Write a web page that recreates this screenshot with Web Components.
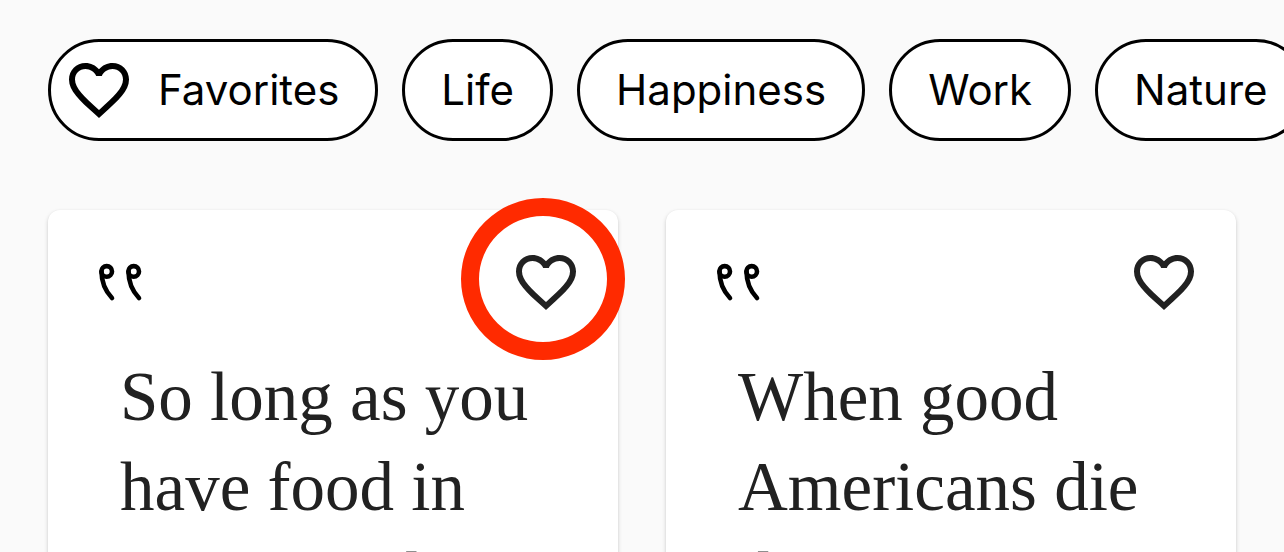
<!DOCTYPE html>
<html lang="en">
<head>
<meta charset="utf-8">
<title>Quotes</title>
<style>
  html, body { margin: 0; height: 100%; overflow: hidden; background: #fafafa; }
</style>
</head>
<body>
<quotes-page></quotes-page>

<script>
function attach(host, html) {
  const template = document.createElement('template');
  template.innerHTML = html;
  host.attachShadow({ mode: 'open' }).append(template.content.cloneNode(true));
}

class HeartIcon extends HTMLElement {
  constructor() {
    super();
    attach(this, `
      <style>
        :host { display: block; flex: none; width: 72px; height: 72px; }
        svg { display: block; width: 100%; height: 100%; fill: currentColor; }
      </style>
      <svg viewBox="0 0 24 24" aria-hidden="true"><path d="M16.5 3c-1.74 0-3.41.81-4.5 2.09C10.91 3.81 9.24 3 7.5 3 4.42 3 2 5.42 2 8.5c0 3.78 3.4 6.86 8.55 11.54L12 21.35l1.45-1.32C18.6 15.36 22 12.28 22 8.5 22 5.42 19.58 3 16.5 3zm-4.4 15.55l-.1.1-.1-.1C7.14 14.24 4 11.39 4 8.5 4 6.5 5.5 5 7.5 5c1.54 0 3.04.99 3.57 2.36h1.87C13.46 5.99 14.96 5 16.5 5c2 0 3.5 1.5 3.5 3.5 0 2.89-3.14 5.74-7.9 10.05z"/></svg>`);
  }
}
customElements.define('heart-icon', HeartIcon);

class QuoteMark extends HTMLElement {
  constructor() {
    super();
    attach(this, `
      <style>
        :host { display: block; width: 48px; height: 48px; }
        svg { display: block; fill: none; stroke: #000; stroke-width: 4.6; stroke-linecap: round; }
      </style>
      <svg width="48" height="48" viewBox="0 0 48 48" aria-hidden="true">
        <circle cx="10.7" cy="13.4" r="5.3"/><path d="M5.5 13.4C5.5 25 9.5 33 16 40"/>
        <circle cx="37.7" cy="13.4" r="5.3"/><path d="M32.5 13.4C32.5 25 36.5 33 43 40"/>
      </svg>`);
  }
}
customElements.define('quote-mark', QuoteMark);

class CategoryChip extends HTMLElement {
  constructor() {
    super();
    attach(this, `
      <style>
        :host { display: block; flex: none; }
        button {
          box-sizing: border-box; display: flex; align-items: center; gap: 23px;
          height: 102px; margin: 0; padding: 0 36px;
          border: 3px solid #000; border-radius: 51px; background: #fff; color: #000;
          font: 400 42px/60px Inter, sans-serif; white-space: nowrap;
        }
        :host([with-icon]) button { padding-left: 12px; }
      </style>
      <button type="button"><slot name="icon"></slot><slot></slot></button>`);
  }
}
customElements.define('category-chip', CategoryChip);

class QuoteCard extends HTMLElement {
  constructor() {
    super();
    attach(this, `
      <style>
        :host {
          display: block; border-radius: 12px; background: #fff; color: #212121;
          box-shadow: 0 2px 4px rgba(0, 0, 0, .18), 0 0 2px rgba(0, 0, 0, .04);
        }
        header { display: flex; align-items: center; justify-content: space-between; padding: 36px 36px 0 48px; }
        button { position: relative; display: block; margin: 0; padding: 0; border: 0; background: none; color: inherit; }
        .ring { display: none; }
        :host([highlighted]) .ring {
          display: block; box-sizing: border-box; position: absolute; left: -49px; top: -48px;
          width: 164px; height: 162px; border: 18px solid #ff2a00; border-radius: 50%; pointer-events: none;
        }
        blockquote { margin: 0; padding: 34px 72px 48px; font: 400 69px/90px "Liberation Serif", serif; }
      </style>
      <header>
        <quote-mark></quote-mark>
        <button type="button" aria-label="Add to favorites"><heart-icon></heart-icon><span class="ring"></span></button>
      </header>
      <blockquote><slot></slot></blockquote>`);
  }
}
customElements.define('quote-card', QuoteCard);

class QuotesPage extends HTMLElement {
  constructor() {
    super();
    attach(this, `
      <style>
        :host { display: block; }
        nav { display: flex; gap: 24px; padding: 39px 48px; overflow: hidden; }
        main { display: grid; grid-template-columns: 1fr 1fr; gap: 48px; padding: 30px 48px 48px; }
      </style>
      <nav aria-label="Categories">
        <category-chip with-icon><heart-icon slot="icon"></heart-icon>Favorites</category-chip>
        <category-chip>Life</category-chip>
        <category-chip>Happiness</category-chip>
        <category-chip>Work</category-chip>
        <category-chip>Nature</category-chip>
      </nav>
      <main>
        <quote-card highlighted>So long as you have food in your mouth</quote-card>
        <quote-card>When good Americans die they</quote-card>
      </main>`);
  }
}
customElements.define('quotes-page', QuotesPage);
</script>
</body>
</html>
